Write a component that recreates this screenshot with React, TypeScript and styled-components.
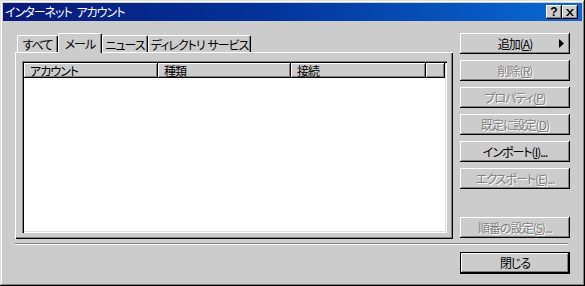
import styled, { createGlobalStyle } from "styled-components";

const GlobalStyle = createGlobalStyle`
    html, body {
        margin: 0;
        padding: 0;
        background: #cccccc;
    }
`;

const Window = styled.div`
    width: 585px;
    height: 286px;
    box-sizing: border-box;
    padding: 3px;
    background: #cccccc;
    box-shadow: inset -1px -1px #000, inset 1px 1px #dfdfdf, inset -2px -2px #808080, inset 2px 2px #fff;
    display: flex;
    flex-direction: column;
    font-family: "Noto Sans CJK JP", "Noto Sans", sans-serif;
    font-size: 12px;
    font-feature-settings: "palt";
    letter-spacing: -1px;
    word-spacing: 3px;
    color: #000;
`;

const TitleBar = styled.div`
    height: 18px;
    display: flex;
    align-items: center;
    padding: 0 4px 0 2px;
    background: linear-gradient(90deg, #0a1a78 0%, #02339a 45%, #0a6ad4 100%);
    color: #fff;
`;

const TitleText = styled.span`
    flex: 1;
    line-height: 18px;
    white-space: nowrap;
`;

const TitleButton = styled.div`
    width: 16px;
    height: 14px;
    box-sizing: border-box;
    background: #cccccc;
    box-shadow: inset -1px -1px #000, inset 1px 1px #fff, inset -2px -2px #808080;
    display: flex;
    align-items: center;
    justify-content: center;
    color: #000;
    font-family: "Liberation Sans", sans-serif;
    font-weight: bold;
    font-size: 12px;
    letter-spacing: 0;
    line-height: 14px;
`;

const Body = styled.div`
    flex: 1;
    display: flex;
    flex-direction: column;
    padding: 12px 12px 0 12px;
`;

const MainRow = styled.div`
    display: grid;
    grid-template-columns: 438px 110px;
    column-gap: 7px;
    height: 206px;
`;

const TabArea = styled.div`
    display: flex;
    flex-direction: column;
`;

const TabRow = styled.div`
    display: flex;
    align-items: flex-end;
    height: 19px;
    padding-left: 2px;
    position: relative;
    z-index: 1;
`;

const Tab = styled.div<{ $active?: boolean; $width: number }>`
    width: ${(p) => p.$width}px;
    height: ${(p) => (p.$active ? 20 : 17)}px;
    margin-bottom: ${(p) => (p.$active ? -1 : 0)}px;
    box-sizing: border-box;
    background: #cccccc;
    border-top: 1px solid #fff;
    border-left: 1px solid #fff;
    border-right: 1px solid #000;
    border-radius: 2px 2px 0 0;
    box-shadow: inset -1px 0 #808080;
    display: flex;
    align-items: center;
    justify-content: center;
    padding-top: ${(p) => (p.$active ? 0 : 1)}px;
    white-space: nowrap;
    word-spacing: 1px;
    line-height: 14px;
`;

const Panel = styled.div`
    flex: 1;
    box-sizing: border-box;
    padding: 9px 6px 6px 7px;
    box-shadow: inset 1px 1px #fff, inset -1px -1px #000, inset -2px -2px #808080;
    display: flex;
`;

const ListView = styled.div`
    flex: 1;
    box-sizing: border-box;
    padding: 2px;
    background: #fff;
    box-shadow: inset 1px 1px #808080, inset 2px 2px #000, inset -1px -1px #fff, inset -2px -2px #dfdfdf;
`;

const HeaderRow = styled.div`
    display: flex;
    height: 15px;
`;

const HeaderCell = styled.div<{ $width: number }>`
    width: ${(p) => p.$width}px;
    flex: ${(p) => (p.$width ? "none" : "1")};
    box-sizing: border-box;
    background: #cccccc;
    box-shadow: inset -1px -1px #000, inset 1px 1px #fff, inset -2px -2px #808080;
    padding-left: 6px;
    line-height: 15px;
    white-space: nowrap;
`;

const ButtonColumn = styled.div`
    display: flex;
    flex-direction: column;
    gap: 6px;
    padding-bottom: 1px;
`;

const Button = styled.div<{ $disabled?: boolean; $default?: boolean }>`
    position: relative;
    width: 110px;
    height: ${(p) => (p.$default ? 22 : 21)}px;
    box-sizing: border-box;
    background: #cccccc;
    border: ${(p) => (p.$default ? "1px solid #000" : "none")};
    box-shadow: inset -1px -1px #000, inset 1px 1px #fff, inset -2px -2px #808080;
    display: flex;
    align-items: center;
    justify-content: center;
    line-height: 14px;
    white-space: nowrap;
    color: ${(p) => (p.$disabled ? "#808080" : "#000")};
    text-shadow: ${(p) => (p.$disabled ? "1px 1px 0 #fff" : "none")};
`;

const PushDown = styled.div`
    margin-top: auto;
`;

const Arrow = styled.svg`
    position: absolute;
    right: 6px;
    top: 6px;
`;

const Separator = styled.div`
    margin: 4px 2px 0 0;
    height: 0;
    border-top: 1px solid #808080;
    border-bottom: 1px solid #fff;
`;

const CloseRow = styled.div`
    display: flex;
    justify-content: flex-end;
    margin-top: 7px;
`;

const buttons = [
    { label: "削除", key: "R", disabled: true },
    { label: "プロパティ", key: "P", disabled: true },
    { label: "既定に設定", key: "D", disabled: true },
    { label: "インポート", key: "I", disabled: false, more: true },
    { label: "エクスポート", key: "E", disabled: true, more: true },
];

export default function App() {
    return (
        <>
            <GlobalStyle />
            <Window>
                <TitleBar>
                    <TitleText>インターネット アカウント</TitleText>
                    <TitleButton>?</TitleButton>
                    <TitleButton>
                        <svg width="8" height="7" viewBox="0 0 8 7">
                            <path d="M0 0h2l2 2.5L6 0h2L5 3.5 8 7H6L4 4.5 2 7H0l3-3.5z" fill="#000" />
                        </svg>
                    </TitleButton>
                </TitleBar>
                <Body>
                    <MainRow>
                        <TabArea>
                            <TabRow>
                                <Tab $width={41}>すべて</Tab>
                                <Tab $width={44} $active>
                                    メール
                                </Tab>
                                <Tab $width={46}>ニュース</Tab>
                                <Tab $width={103}>ディレクトリ サービス</Tab>
                            </TabRow>
                            <Panel>
                                <ListView>
                                    <HeaderRow>
                                        <HeaderCell $width={134}>アカウント</HeaderCell>
                                        <HeaderCell $width={133}>種類</HeaderCell>
                                        <HeaderCell $width={135}>接続</HeaderCell>
                                        <HeaderCell $width={0} />
                                    </HeaderRow>
                                </ListView>
                            </Panel>
                        </TabArea>
                        <ButtonColumn>
                            <Button>
                                追加(<u>A</u>)
                                <Arrow width="5" height="9" viewBox="0 0 5 9">
                                    <path d="M0 0L5 4.5 0 9z" fill="#000" />
                                </Arrow>
                            </Button>
                            {buttons.map((b) => (
                                <Button key={b.key} $disabled={b.disabled}>
                                    {b.label}(<u>{b.key}</u>){b.more ? "..." : ""}
                                </Button>
                            ))}
                            <PushDown>
                                <Button $disabled>
                                    順番の設定(<u>S</u>)...
                                </Button>
                            </PushDown>
                        </ButtonColumn>
                    </MainRow>
                    <Separator />
                    <CloseRow>
                        <Button $default>閉じる</Button>
                    </CloseRow>
                </Body>
            </Window>
        </>
    );
}
